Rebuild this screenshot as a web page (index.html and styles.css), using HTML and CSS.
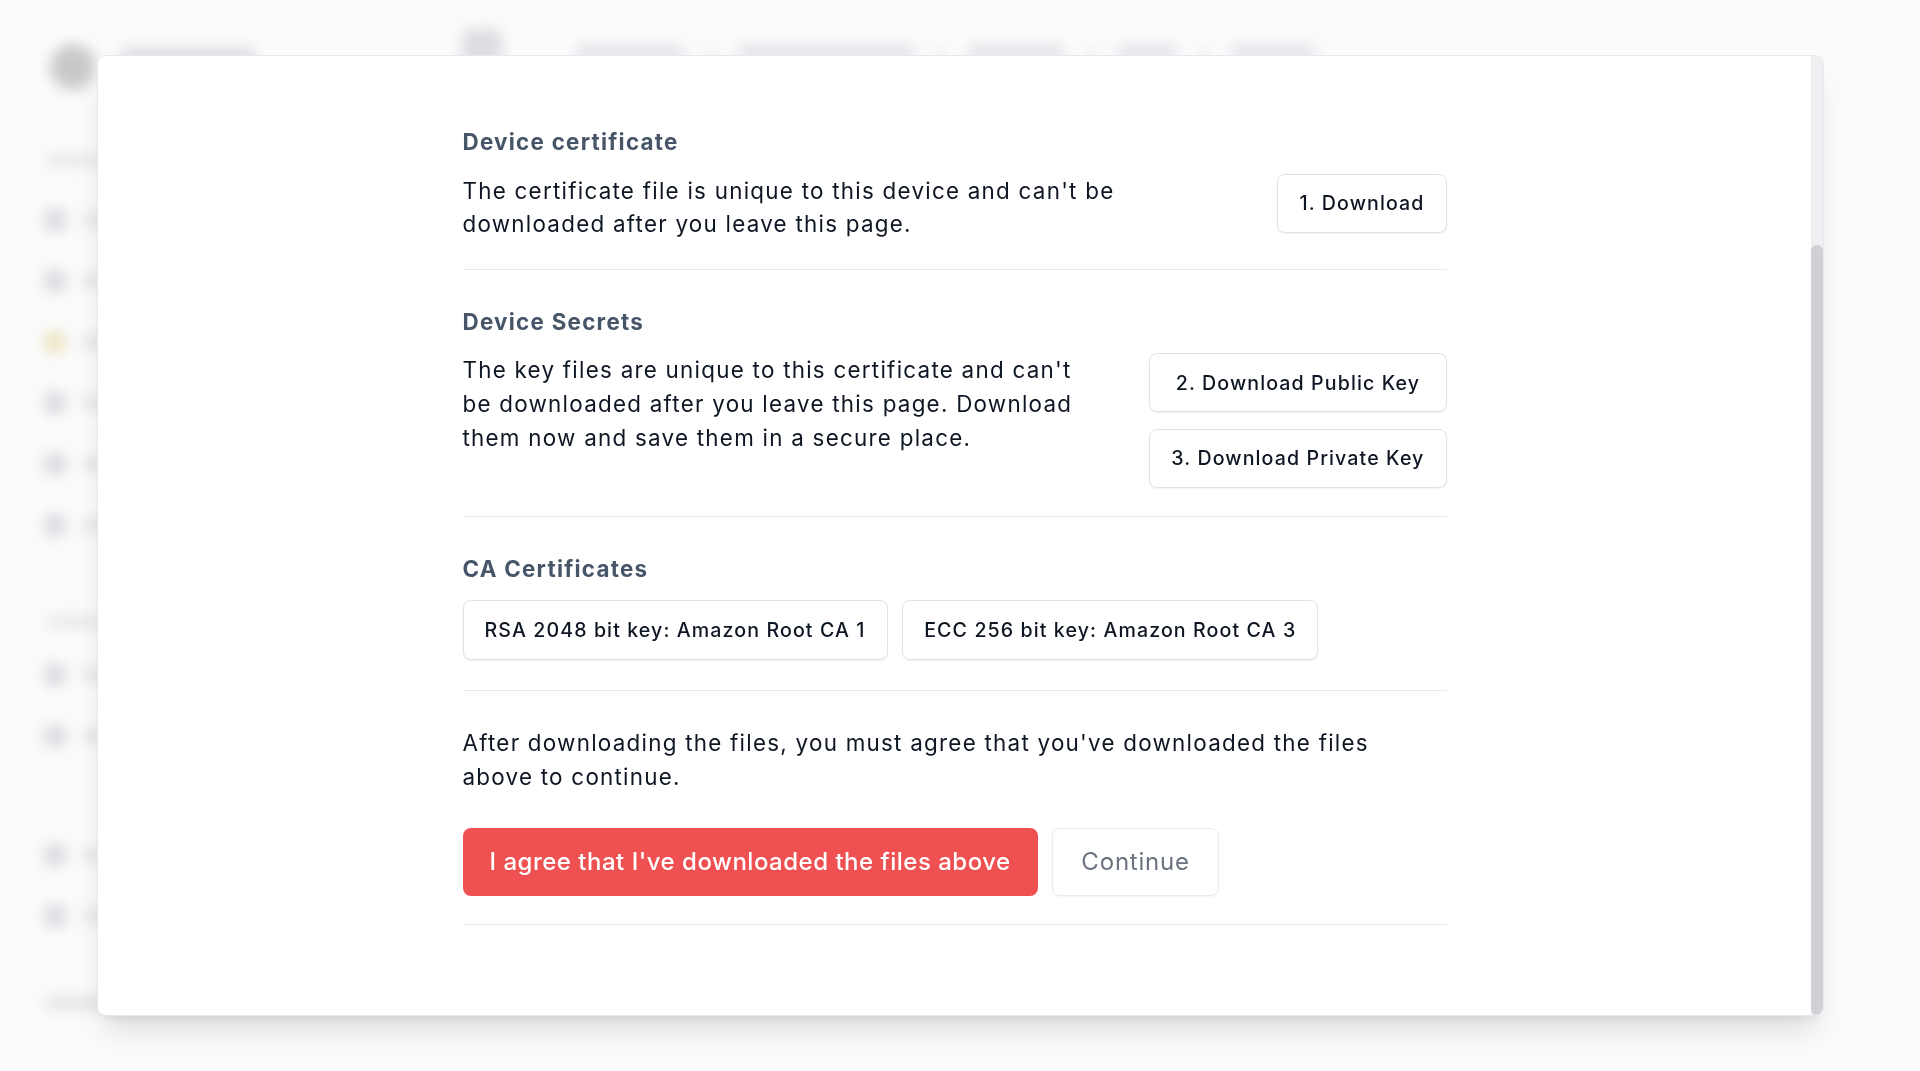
FILE: index.html
```html
<!DOCTYPE html>
<html lang="en">
<head>
<meta charset="utf-8">
<title>Device certificate</title>
<link rel="stylesheet" href="styles.css">
</head>
<body>
<div class="app">
  <aside class="sidebar">
    <div class="brand"><span class="avatar"></span><span class="bar bar-brand"></span></div>
    <div class="nav-label"></div>
    <div class="nav-item"><span class="ico"></span><span class="bar"></span></div>
    <div class="nav-item"><span class="ico"></span><span class="bar"></span></div>
    <div class="nav-item"><span class="ico ico-yellow"></span><span class="bar"></span></div>
    <div class="nav-item"><span class="ico"></span><span class="bar"></span></div>
    <div class="nav-item"><span class="ico"></span><span class="bar"></span></div>
    <div class="nav-item"><span class="ico"></span><span class="bar"></span></div>
    <div class="nav-label nav-label-2"></div>
    <div class="nav-item"><span class="ico"></span><span class="bar"></span></div>
    <div class="nav-item"><span class="ico"></span><span class="bar"></span></div>
    <div class="nav-item nav-gap"><span class="ico"></span><span class="bar"></span></div>
    <div class="nav-item"><span class="ico"></span><span class="bar"></span></div>
    <div class="nav-item nav-foot"><span class="bar bar-foot"></span></div>
  </aside>
  <main class="main">
    <header class="topbar">
      <span class="square"></span>
      <span class="crumb c1"></span><span class="sep"></span>
      <span class="crumb c2"></span><span class="sep"></span>
      <span class="crumb c3"></span><span class="sep"></span>
      <span class="crumb c4"></span><span class="sep"></span>
      <span class="crumb c5"></span>
    </header>
  </main>
</div>

<div class="overlay">
  <div class="modal">
    <div class="scroll">
      <div class="content">
        <section class="section first">
          <h2>Device certificate</h2>
          <div class="row">
            <p class="text">The certificate file is unique to this device and can't be downloaded after you leave this page.</p>
            <button class="btn">1. Download</button>
          </div>
        </section>

        <section class="section">
          <h2>Device Secrets</h2>
          <div class="row">
            <p class="text">The key files are unique to this certificate and can't be downloaded after you leave this page. Download them now and save them in a secure place.</p>
            <div class="btn-col">
              <button class="btn">2. Download Public Key</button>
              <button class="btn">3. Download Private Key</button>
            </div>
          </div>
        </section>

        <section class="section ca">
          <h2>CA Certificates</h2>
          <div class="ca-row">
            <button class="btn btn-ca">RSA 2048 bit key: Amazon Root CA 1</button>
            <button class="btn btn-ca">ECC 256 bit key: Amazon Root CA 3</button>
          </div>
        </section>

        <section class="section agree">
          <p class="text wide">After downloading the files, you must agree that you've downloaded the files above to continue.</p>
          <div class="actions">
            <button class="btn-primary">I agree that I've downloaded the files above</button>
            <button class="btn-ghost">Continue</button>
          </div>
        </section>
      </div>
    </div>
    <div class="scrollbar"><div class="thumb"></div></div>
  </div>
</div>
</body>
</html>
```

FILE: styles.css
```css
* { box-sizing: border-box; }

html, body {
  margin: 0;
  padding: 0;
  height: 100%;
  overflow: hidden;
}

body {
  font-family: Inter, "Noto Sans", "Liberation Sans", sans-serif;
  background: #fbfbfc;
  color: #111827;
}

/* ---------- blurred page behind the dialog ---------- */
.app {
  display: flex;
  height: 1071px;
  background: #fbfbfc;
  filter: blur(7px);
}

.sidebar {
  width: 440px;
  padding: 44px 0 0 44px;
  display: flex;
  flex-direction: column;
}

.brand {
  display: flex;
  align-items: center;
  gap: 24px;
  margin-bottom: 65px;
  margin-left: 6px;
}

.avatar {
  width: 46px;
  height: 46px;
  border-radius: 50%;
  background: #c9c9cc;
}

.bar {
  display: block;
  height: 14px;
  width: 120px;
  border-radius: 7px;
  background: #e3e4e7;
}

.bar-brand { width: 136px; height: 18px; background: #dcdde1; margin-top: -20px; }
.bar-foot { width: 150px; }

.nav-label {
  width: 60px;
  height: 12px;
  border-radius: 6px;
  background: #e6e7ea;
  margin: 0 0 22px 2px;
}

.nav-label-2 { margin-top: 61px; margin-bottom: 16px; }

.nav-item {
  display: flex;
  align-items: center;
  gap: 16px;
  height: 61px;
}

.nav-gap { margin-top: 58px; }
.nav-foot { margin-top: 26px; }

.ico {
  width: 22px;
  height: 22px;
  border-radius: 6px;
  background: #dadbdf;
}

.ico-yellow { background: #ece6c4; }

.main {
  flex: 1;
}

.topbar {
  height: 100px;
  display: flex;
  align-items: center;
  padding: 4px 0 0 22px;
}

.square {
  width: 40px;
  height: 36px;
  border-radius: 8px;
  background: #dcdde0;
  margin-right: 73px;
  margin-top: -10px;
}

.crumb {
  height: 14px;
  border-radius: 7px;
  background: #e1e2e6;
}

.sep {
  width: 8px;
  height: 10px;
  margin: 0 22px;
  background: #e6e7ea;
  border-radius: 2px;
}

.c1 { width: 110px; }
.c2 { width: 178px; }
.c3 { width: 98px; }
.c4 { width: 61px; }
.c5 { width: 86px; }

/* ---------- dialog ---------- */
.overlay {
  position: fixed;
  inset: 0;
  padding: 55px 96px 55px 97px;
}

.modal {
  height: 961px;
  background: #ffffff;
  border: 1px solid #e5e8ee;
  border-radius: 9px;
  box-shadow: 0 22px 30px -8px rgba(0, 0, 0, 0.12), 0 8px 12px -6px rgba(0, 0, 0, 0.08);
  display: flex;
  overflow: hidden;
}

.scroll {
  flex: 1;
  min-width: 0;
}

.content {
  max-width: 984px;
  margin: 0 auto;
  padding-top: 69px;
}

.scrollbar {
  width: 12px;
  background: #efeff1;
  display: flex;
  flex-direction: column;
  padding-top: 189px;
}

.thumb {
  flex: 1;
  background: #d0d0d5;
  border-radius: 6px;
}

.section {
  padding: 35px 0 28px;
  border-bottom: 1px solid #e5e8ee;
}

.section.first { padding-top: 0; }
.section.ca { padding-bottom: 30px; }

h2 {
  margin: 0 0 15px;
  font-size: 22.4px;
  line-height: 33.6px;
  font-weight: 700;
  color: #475569;
  letter-spacing: 1.25px;
}

.row {
  display: flex;
  justify-content: space-between;
  align-items: flex-start;
  gap: 56px;
}

.text {
  margin: 0;
  font-size: 22.4px;
  line-height: 33.6px;
  color: #0f1623;
  letter-spacing: 1.25px;
  max-width: 716px;
}

.text.wide { max-width: 940px; }

.btn {
  height: 59px;
  padding: 0 21px;
  background: #ffffff;
  border: 1px solid #dde3ec;
  border-radius: 8px;
  box-shadow: 0 1px 2px rgba(15, 23, 42, 0.06);
  font-family: inherit;
  font-size: 19.6px;
  font-weight: 500;
  color: #0f1623;
  letter-spacing: 1.1px;
  white-space: nowrap;
  flex-shrink: 0;
}

.btn-ca { height: 60px; }

.btn-col {
  display: flex;
  flex-direction: column;
  gap: 16.5px;
  flex-shrink: 0;
}

.ca-row {
  display: flex;
  gap: 14.7px;
}

.actions {
  display: flex;
  gap: 14.7px;
  margin-top: 34.5px;
}

.btn-primary {
  height: 67.6px;
  padding: 0 27px;
  background: #ef5152;
  border: none;
  border-radius: 8px;
  font-family: inherit;
  font-size: 24px;
  font-weight: 500;
  color: #ffffff;
  letter-spacing: 0.5px;
  white-space: nowrap;
}

.btn-ghost {
  height: 67.6px;
  padding: 0 28px;
  background: #ffffff;
  border: 1px solid #e8ebf0;
  border-radius: 8px;
  box-shadow: 0 1px 2px rgba(15, 23, 42, 0.04);
  font-family: inherit;
  font-size: 24px;
  font-weight: 400;
  color: #6b7280;
  letter-spacing: 0.8px;
}
```
